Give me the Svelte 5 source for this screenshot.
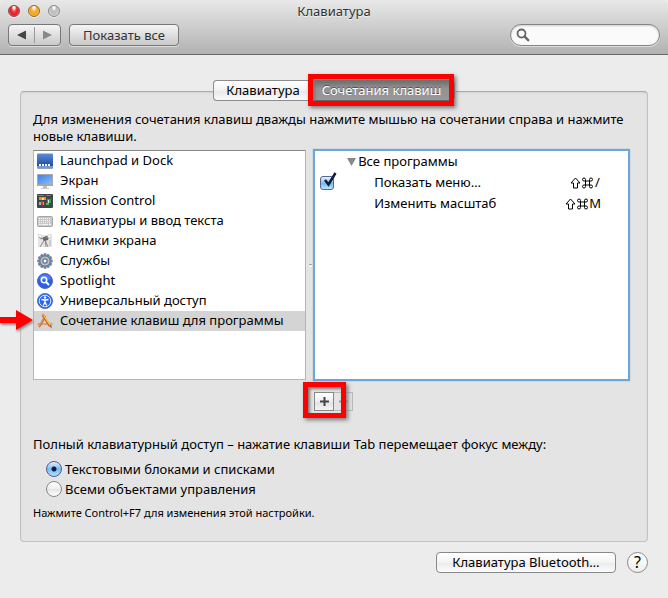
<script>
  let query = '';
  let access = 'text';
  let menuOn = true;
  let current = 'apps';

  const sections = [
    { id: 'dock', name: 'Launchpad и Dock' },
    { id: 'screen', name: 'Экран' },
    { id: 'mission', name: 'Mission Control' },
    { id: 'keyboard', name: 'Клавиатуры и ввод текста' },
    { id: 'shots', name: 'Снимки экрана' },
    { id: 'services', name: 'Службы' },
    { id: 'spotlight', name: 'Spotlight' },
    { id: 'universal', name: 'Универсальный доступ' },
    { id: 'apps', name: 'Сочетание клавиш для программы' }
  ];
  const teeth = [0, 30, 60, 90, 120, 150, 180, 210, 240, 270, 300, 330];
</script>

<div class="window">
  <header>
    <div class="titlebar">
      <div class="lights">
        <button class="light red" aria-label="Закрыть"></button>
        <button class="light yellow" aria-label="Свернуть"></button>
        <button class="light gray" aria-label="Развернуть"></button>
      </div>
      <h1>Клавиатура</h1>
    </div>
    <div class="toolbar">
      <div class="nav">
        <button aria-label="Назад"><svg width="9" height="10" viewBox="0 0 9 10"><path d="M9 0.5v9L0 5z" fill="#444" /></svg></button>
        <button aria-label="Вперед"><svg width="9" height="10" viewBox="0 0 9 10"><path d="M0 0.5v9L9 5z" fill="#888" /></svg></button>
      </div>
      <button class="show_all">Показать все</button>
      <label class="search">
        <svg width="14" height="14" viewBox="0 0 14 14" fill="none" stroke="#666" stroke-linecap="round">
          <circle cx="5.5" cy="5.5" r="4" stroke-width="1.8" />
          <path d="M8.7 8.7l3.5 3.5" stroke-width="2.4" />
        </svg>
        <input type="text" aria-label="Поиск" bind:value={query} />
      </label>
    </div>
  </header>

  <main>
    <section class="panel">
      <div class="tabs">
        <button class="tab">Клавиатура</button>
        <button class="tab active">Сочетания клавиш</button>
        <span class="mark mark_tab"></span>
      </div>

      <p class="hint">Для изменения сочетания клавиш дважды нажмите мышью на сочетании справа и нажмите новые клавиши.</p>

      <div class="lists">
        <div class="sections">
          {#each sections as item}
            <button class="row" class:selected={current === item.id} on:click={() => (current = item.id)}>
              <svg width="16" height="16" viewBox="0 0 16 16">
                {#if item.id === 'dock'}
                  <defs><linearGradient id="dock" x2="0" y2="1"><stop stop-color="#5c8cdd" /><stop offset="1" stop-color="#123f98" /></linearGradient></defs>
                  <rect y="0.5" width="16" height="15" rx="1" fill="url(#dock)" />
                  <path d="M0 13h16v2H0z" fill="#7898cf" />
                  <path d="M2 11h2v2H2zM5 11h2v2H5zM8 11h2v2H8zM11 11h2v2h-2z" fill="#fff" />
                {:else if item.id === 'screen'}
                  <defs><linearGradient id="screen" x2="1" y2="1"><stop stop-color="#3c82e4" /><stop offset="1" stop-color="#8abdfa" /></linearGradient></defs>
                  <rect x="0" y="1" width="16" height="12" rx="0.5" fill="#a5a9ad" />
                  <rect x="1" y="2" width="14" height="9" fill="url(#screen)" />
                  <path d="M6 13h4v2H6z" fill="#bbb" />
                  <path d="M4 15h8v1H4z" fill="#ccc" />
                {:else if item.id === 'mission'}
                  <rect y="1" width="16" height="14" rx="1" fill="#41464b" />
                  <path d="M1 2h6v1H1zM9 2h5v1H9z" fill="#777d83" />
                  <path d="M2 4h7v3H2z" fill="#f38b20" />
                  <path d="M5 5h2v2H5z" fill="#ffe169" />
                  <path d="M10 6h4v4h-4z" fill="#27a943" />
                  <path d="M2 9h5v3H2z" fill="#a4afb9" />
                  <path d="M4 8h2v4H4z" fill="#cb3932" />
                  <path d="M9 10h3v2H9z" fill="#4bbb54" />
                  <path d="M11 7h1v3h-1z" fill="#d9e8e1" />
                {:else if item.id === 'keyboard'}
                  <rect x="0.5" y="3.5" width="15" height="10" rx="1" fill="#c9c9c9" stroke="#a5a5a5" />
                  <path d="M2 5.5h12M2 7.5h12M2 9.5h12" stroke="#f4f4f4" stroke-dasharray="1 1" />
                  <path d="M2 11.5h2m1 0h6m1 0h2" stroke="#f4f4f4" />
                {:else if item.id === 'shots'}
                  <rect x="1" y="2" width="14" height="12" fill="#e4e4e4" />
                  <path d="M8 6L3 14M8 6l1 8M8 7l3 7" stroke="#8c8c8c" fill="none" />
                  <path d="M12 7h2v6h-2z" fill="#ccc" />
                  <path d="M5 5l4-2 3 1-1 3-4 1z" fill="#666" />
                  <path d="M2 4l3 2M9 5l4-3" stroke="#888" stroke-width="1.5" />
                  <path d="M1 1l3 1 1 3-3-1zM11 2l3-1v3l-3 1z" fill="#fff" stroke="#bbb" stroke-width="0.5" />
                {:else if item.id === 'services'}
                  <g fill="#71829a">
                    {#each teeth as angle}
                      <path d="M6.8 0.3h2.4l0.6 3H6.2z" transform="rotate({angle} 8 8)" />
                    {/each}
                    <circle cx="8" cy="8" r="6" />
                  </g>
                  <circle cx="8" cy="8" r="4" fill="#8d9bb0" stroke="#c5ccd7" />
                  <circle cx="8" cy="8" r="2" fill="#fff" stroke="#60718c" />
                {:else if item.id === 'spotlight'}
                  <circle cx="8" cy="8" r="7.5" fill="#2862e3" stroke="#5360c9" />
                  <path d="M2 6a6.3 6.3 0 0 1 12 0c-4 1.5-8 1.5-12 0z" fill="#6492ee" opacity="0.6" />
                  <g fill="none" stroke="#fff"><circle cx="7" cy="7" r="2.7" stroke-width="1.5" /><path d="M9 9l3 3" stroke-width="2" /></g>
                {:else if item.id === 'universal'}
                  <circle cx="8" cy="8" r="7.5" fill="#2868e5" stroke="#5767c9" />
                  <circle cx="8" cy="8" r="5.8" fill="none" stroke="#dce8ff" />
                  <circle cx="8" cy="4.5" r="1.2" fill="#fff" />
                  <path d="M4.5 6.5l3 0.5h1l3-0.5M8 7v2.5M8 9l-1.7 3.5M8 9l1.7 3.5" stroke="#fff" stroke-width="1.3" fill="none" />
                {:else}
                  <path d="M0.5 11h15" stroke="#d9a273" stroke-width="2" />
                  <path d="M8.5 3L2 14" stroke="#c4602a" stroke-width="2" />
                  <path d="M8 3L1.5 14" stroke="#e9b489" stroke-width="0.8" />
                  <path d="M6 2.5l7 10.5" stroke="#d8542c" stroke-width="2.4" />
                  <path d="M6.5 2.2l7 10.5" stroke="#ffd13e" stroke-width="1.2" />
                  <path d="M4.500 2l2-1.500 1 1.500-2 1.500z" fill="#d98880" />
                  <path d="M12 13l2-1.500 1 4z" fill="#806850" />
                {/if}
              </svg>
              <span>{item.name}</span>
              {#if item.id === 'apps'}
                <svg class="arrow" width="34" height="24" viewBox="0 0 34 24"><path d="M0 9h16V2l17 10-17 10v-7H0z" fill="#f00" /></svg>
              {/if}
            </button>
          {/each}
        </div>

        <div class="splitter"><i></i></div>

        <div class="shortcuts">
          <div class="line group">
            <svg width="9" height="8" viewBox="0 0 9 8"><path d="M0 0h9L4.5 8z" fill="#888" /></svg>
            Все программы
          </div>
          <div class="line">
            <input type="checkbox" id="menu" bind:checked={menuOn} />
            <svg class="tick" class:off={!menuOn} width="16" height="18" viewBox="0 0 16 18"><path d="M4 8l3.5 4.5L14.5 1" fill="none" stroke="#101c3c" stroke-width="2.5" /></svg>
            <label for="menu">Показать меню…</label>
            <kbd>
              <svg width="11" height="12" viewBox="0 0 11 12"><path d="M5.5 1L10 6H7.5v5h-4V6H1z" /></svg>
              <svg width="11" height="12" viewBox="0 0 11 12"><path d="M3.5 4h4v4h-4zM3.5 4V2.5A1.5 1.5 0 1 0 2 4zM7.5 4V2.5A1.5 1.5 0 1 1 9 4zM3.5 8v1.5A1.5 1.5 0 1 1 2 8zM7.5 8v1.5A1.5 1.5 0 1 0 9 8z" /></svg>
              <b class="slash">/</b>
            </kbd>
          </div>
          <div class="line">
            <span class="name">Изменить масштаб</span>
            <kbd>
              <svg width="11" height="12" viewBox="0 0 11 12"><path d="M5.5 1L10 6H7.5v5h-4V6H1z" /></svg>
              <svg width="11" height="12" viewBox="0 0 11 12"><path d="M3.5 4h4v4h-4zM3.5 4V2.5A1.5 1.5 0 1 0 2 4zM7.5 4V2.5A1.5 1.5 0 1 1 9 4zM3.5 8v1.5A1.5 1.5 0 1 1 2 8zM7.5 8v1.5A1.5 1.5 0 1 0 9 8z" /></svg>
              <b>M</b>
            </kbd>
          </div>
        </div>
      </div>

      <div class="edit">
        <button aria-label="Добавить"><svg width="9" height="9" viewBox="0 0 9 9"><path d="M4.5 0v9M0 4.5h9" stroke="#444" stroke-width="2" /></svg></button>
        <button aria-label="Удалить" disabled><svg width="9" height="9" viewBox="0 0 9 9"><path d="M0 4.5h9" stroke="#999" stroke-width="2" /></svg></button>
        <span class="mark mark_plus"></span>
      </div>

      <p class="access">Полный клавиатурный доступ – нажатие клавиши Tab перемещает фокус между:</p>
      <label class="radio"><input type="radio" name="access" value="text" bind:group={access} />Текстовыми блоками и списками</label>
      <label class="radio"><input type="radio" name="access" value="all" bind:group={access} />Всеми объектами управления</label>
      <p class="note">Нажмите Control+F7 для изменения этой настройки.</p>
    </section>

    <footer>
      <button class="bluetooth">Клавиатура Bluetooth…</button>
      <button class="help" aria-label="Справка">?</button>
    </footer>
  </main>
</div>

<style>
  :global(body) {
    background: #ececec;
  }
  .window {
    position: relative;
    font: 13px/17px "Noto Sans", "Open Sans", sans-serif;
    color: #000;
    overflow: hidden;
  }
  button, input {
    font: inherit;
    color: inherit;
    margin: 0;
    padding: 0;
    box-sizing: border-box;
  }
  p, h1 {
    margin: 0;
    font-weight: normal;
  }
  header {
    background: linear-gradient(#e8e8e8, #b2b2b2);
    border-bottom: 1px solid #686868;
    border-radius: 5px 5px 0 0;
    padding-bottom: 8px;
  }
  .titlebar {
    display: grid;
    grid-template-columns: 1fr auto 1fr;
    align-items: center;
    height: 24px;
    padding: 0 8px;
  }
  h1 {
    font-size: 13px;
    padding-bottom: 2px;
    color: #333;
    text-shadow: 0 1px #f4f4f4;
  }
  .lights {
    display: flex;
    gap: 8px;
    padding-bottom: 2px;
  }
  .light {
    width: 12px;
    height: 12px;
    border: 1px solid #8c4a48;
    border-radius: 50%;
    box-shadow: 0 1px #eee;
  }
  .red {
    background: radial-gradient(ellipse at 50% 15%, #fff 8%, #ef4049 35%, #e31b25 60%, #ff9a91);
  }
  .yellow {
    border-color: #9a6626;
    background: radial-gradient(ellipse at 50% 15%, #fff 8%, #f4b13a 35%, #f3a325 60%, #ffec7b);
  }
  .gray {
    border-color: #888;
    background: radial-gradient(ellipse at 50% 15%, #fff 8%, #bbb 35%, #c5c5c5 60%, #eee);
  }
  .toolbar {
    display: flex;
    gap: 8px;
    padding: 0 8px;
  }
  .nav, .show_all {
    display: flex;
    height: 22px;
    border: 1px solid #777;
    border-radius: 4px;
    background: linear-gradient(#f5f5f5, #c9c9c9);
    box-shadow: 0 1px #ddd;
    box-sizing: border-box;
  }
  .nav {
    width: 53px;
    align-items: center;
  }
  .nav button {
    flex: 1;
    height: 16px;
    border: 0;
    background: none;
  }
  .nav button + button {
    border-left: 1px solid #999;
  }
  .nav svg {
    display: block;
    margin: auto;
  }
  .show_all {
    width: 110px;
    justify-content: center;
    align-items: center;
    color: #333;
  }
  .search {
    display: flex;
    align-items: center;
    gap: 4px;
    width: 150px;
    height: 22px;
    margin-left: auto;
    padding: 0 5px;
    border: 1px solid #858585;
    border-radius: 11px;
    background: #fafafa;
    box-shadow: inset 0 1px 2px #ccc, 0 1px #ddd;
    box-sizing: border-box;
  }
  .search input {
    flex: 1;
    min-width: 0;
    border: 0;
    outline: 0;
    background: none;
  }
  main {
    padding: 36px 20px 24px;
  }
  .panel {
    border: 1px solid #c2c2c2;
    border-top-color: #aaa;
    border-radius: 4px;
    background: #e4e4e4;
    padding: 0 18px 20px 12px;
    box-shadow: inset 0 1px 2px #d2d2d2;
  }
  .tabs {
    position: relative;
    display: flex;
    width: 242px;
    height: 21px;
    margin: -12px auto 10px;
    left: 3px;
  }
  .tab {
    border: 1px solid #8c8c8c;
    border-right: 0;
    border-radius: 4px 0 0 4px;
    background: linear-gradient(#fff, #f2f2f2 50%, #e8e8e8 51%, #fafafa);
    width: 99px;
  }
  .tab.active {
    flex: 1;
    padding-right: 4px;
    border: 1px solid #636363;
    border-radius: 0 4px 4px 0;
    background: linear-gradient(#707070, #929292 40%, #999);
    color: #fff;
    text-shadow: 0 -1px #555;
  }
  .mark {
    position: absolute;
    border: 5px solid #f00;
    box-sizing: border-box;
    box-shadow: 2px 2px 4px #777, inset 2px 2px 3px #777;
    pointer-events: none;
  }
  .mark_tab {
    inset: -6px 1px -5px 95px;
  }
  .hint {
    margin-right: -18px;
    padding-right: 10px;
  }
  .lists {
    display: flex;
    height: 230px;
    margin-top: 5px;
  }
  .sections {
    flex: 273;
    border: 1px solid #b5b5b5;
    border-top-color: #888;
    background: #fff;
    box-sizing: border-box;
    min-width: 0;
  }
  .row {
    position: relative;
    display: flex;
    align-items: center;
    gap: 7px;
    width: 100%;
    height: 20px;
    padding-left: 3px;
    border: 0;
    background: none;
    white-space: nowrap;
  }
  .row span {
    padding-bottom: 2px;
  }
  .row.selected {
    background: #d4d4d4;
  }
  .arrow {
    position: absolute;
    left: -34px;
    top: -3px;
    filter: drop-shadow(1px 2px 1px #888);
  }
  .splitter {
    display: flex;
    align-items: center;
    justify-content: center;
    width: 8px;
  }
  .splitter i {
    width: 3px;
    height: 2px;
    border-top: 1px solid #777;
    border-radius: 50%;
    background: #fff;
  }
  .shortcuts {
    flex: 315;
    border: 1px solid #6ea6da;
    box-shadow: 0 0 1px 1px #6ea6da;
    background: #fff;
    box-sizing: border-box;
    min-width: 0;
  }
  .line {
    position: relative;
    display: flex;
    align-items: center;
    height: 21px;
    padding: 0 27px 0 5px;
  }
  .group {
    gap: 2px;
    padding-left: 32px;
  }
  .line input {
    appearance: none;
    width: 14px;
    height: 14px;
    border: 1px solid #59648f;
    border-radius: 3px;
    background: linear-gradient(#e8f4ff, #79b8f0 55%, #b7eaff);
  }
  .tick {
    position: absolute;
    left: 6px;
    top: 0;
    pointer-events: none;
  }
  .off {
    display: none;
  }
  .line label {
    margin-left: 40px;
  }
  .name {
    margin-left: 54px;
  }
  kbd {
    display: flex;
    align-items: center;
    gap: 1px;
    margin-left: auto;
    font: inherit;
  }
  kbd svg {
    fill: none;
    stroke: #000;
  }
  b {
    font-weight: normal;
  }
  .slash {
    width: 7px;
    text-align: center;
  }
  .edit {
    position: relative;
    display: flex;
    width: 39px;
    height: 19px;
    margin-top: 12px;
    margin-left: 281px;
  }
  .edit button {
    flex: 1;
    border: 1px solid #888;
    background: linear-gradient(#fff, #eee 50%, #e2e2e2 51%, #f4f4f4);
  }
  .edit button:disabled {
    border-color: #bbb;
    border-left: 0;
    background: #e4e4e4;
  }
  .edit svg {
    display: block;
    margin: auto;
  }
  .mark_plus {
    inset: -10px 7px -7px -11px;
  }
  .access {
    margin: 25px 0 6px;
  }
  .radio {
    display: flex;
    align-items: center;
    gap: 3px;
    height: 20px;
    padding-left: 13px;
  }
  .radio input {
    appearance: none;
    width: 16px;
    height: 16px;
    border: 1px solid #888;
    border-radius: 50%;
    background: linear-gradient(#fff, #eee 50%, #e4e4e4 51%, #fff);
  }
  .radio input:checked {
    border-color: #535a91;
    background: radial-gradient(circle, #101c3c 2px, transparent 3px), linear-gradient(#e4f0fc, #7bb9f0 50%, #a9e2ff);
  }
  .note {
    margin-top: 5px;
    font-size: 11px;
  }
  footer {
    display: flex;
    align-items: center;
    justify-content: flex-end;
    gap: 11px;
    margin-top: 10px;
  }
  .bluetooth {
    width: 180px;
    height: 21px;
    border: 1px solid #888;
    border-radius: 4px;
    background: linear-gradient(#fff, #f4f4f4 50%, #eaeaea 51%, #fcfcfc);
  }
  .help {
    width: 21px;
    height: 21px;
    border: 1px solid #888;
    border-radius: 50%;
    background: linear-gradient(#fff, #eee);
    font-size: 16px;
  }
</style>
